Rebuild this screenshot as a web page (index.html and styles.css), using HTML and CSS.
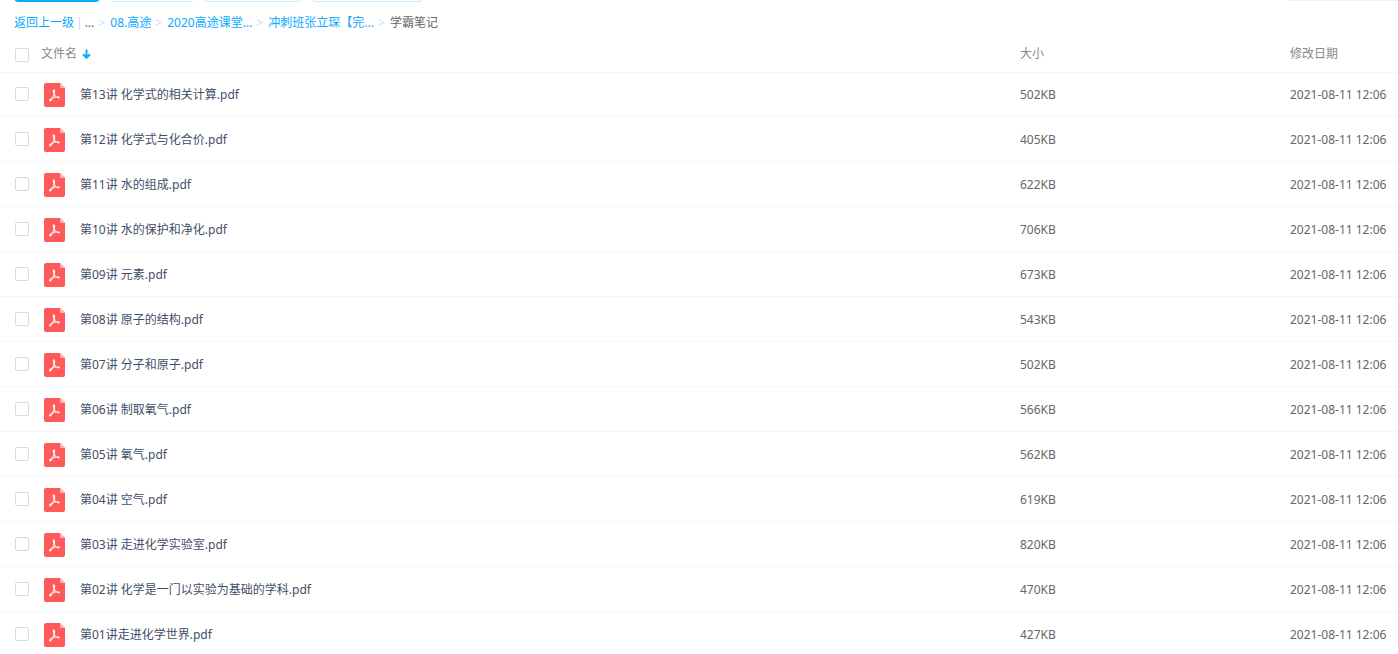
FILE: index.html
```html
<!DOCTYPE html>
<html lang="zh-CN">
<head>
<meta charset="utf-8">
<title>学霸笔记</title>
<link rel="stylesheet" href="styles.css">
</head>
<body>
<svg class="defs" aria-hidden="true">
  <symbol id="pdf" viewBox="0 0 21 24">
    <path fill="#ff5a5a" d="M2 0h14l5 5v17a2 2 0 0 1-2 2H2a2 2 0 0 1-2-2V2a2 2 0 0 1 2-2z"/>
    <path fill="#ffb3b3" d="M16 0l5 5h-4a1 1 0 0 1-1-1z"/>
    <path fill="none" stroke="#ffecec" stroke-width="1.2" stroke-linecap="round" stroke-linejoin="round" d="M9.800 6.800c.9.400.9 2.500.4 4.300-.7 2.300-2 4.900-3.400 6.400-.7.700-1.500.2-1.100-.6.900-1.500 4-2.500 6.300-2.900 2.600-.4 3.700.1 3.300.6-.5.500-3-.2-4.100-1.600C10 11.500 9.200 9.400 9.300 7.500c0-.3.2-.7.5-.7z"/>
  </symbol>
</svg>
<div class="toolbar">
  <button class="btn btn-primary" type="button"></button>
  <button class="btn btn-new" type="button"></button>
  <button class="btn btn-offline" type="button"></button>
  <button class="btn btn-devices" type="button"></button>
  <input class="search" type="search">
</div>
<nav class="crumbs">
  <a href="#">返回上一级</a><span class="bar">|</span><span class="dots">...</span><span class="sep">&gt;</span><a href="#">08.高途</a><span class="sep">&gt;</span><a href="#">2020高途课堂...</a><span class="sep">&gt;</span><a href="#">冲刺班张立琛【完...</a><span class="sep">&gt;</span><span class="current">学霸笔记</span>
</nav>
<table class="files">
  <thead>
    <tr>
      <th class="name"><div class="cell"><input type="checkbox" id="all"><label class="title" for="all">文件名</label><svg class="arrow" viewBox="0 0 9 10" aria-hidden="true"><path d="M4.500 0.500v8M1 5.200l3.500 3.500L8 5.200" fill="none" stroke="#09aaff" stroke-width="2"/></svg></div></th>
      <th class="size">大小</th>
      <th class="date">修改日期</th>
    </tr>
  </thead>
  <tbody>
    <tr><td><div class="cell"><input type="checkbox" id="f13"><svg class="icon"><use href="#pdf"/></svg><label for="f13">第13讲 化学式的相关计算.pdf</label></div></td><td>502KB</td><td>2021-08-11 12:06</td></tr>
    <tr><td><div class="cell"><input type="checkbox" id="f12"><svg class="icon"><use href="#pdf"/></svg><label for="f12">第12讲 化学式与化合价.pdf</label></div></td><td>405KB</td><td>2021-08-11 12:06</td></tr>
    <tr><td><div class="cell"><input type="checkbox" id="f11"><svg class="icon"><use href="#pdf"/></svg><label for="f11">第11讲 水的组成.pdf</label></div></td><td>622KB</td><td>2021-08-11 12:06</td></tr>
    <tr><td><div class="cell"><input type="checkbox" id="f10"><svg class="icon"><use href="#pdf"/></svg><label for="f10">第10讲 水的保护和净化.pdf</label></div></td><td>706KB</td><td>2021-08-11 12:06</td></tr>
    <tr><td><div class="cell"><input type="checkbox" id="f09"><svg class="icon"><use href="#pdf"/></svg><label for="f09">第09讲 元素.pdf</label></div></td><td>673KB</td><td>2021-08-11 12:06</td></tr>
    <tr><td><div class="cell"><input type="checkbox" id="f08"><svg class="icon"><use href="#pdf"/></svg><label for="f08">第08讲 原子的结构.pdf</label></div></td><td>543KB</td><td>2021-08-11 12:06</td></tr>
    <tr><td><div class="cell"><input type="checkbox" id="f07"><svg class="icon"><use href="#pdf"/></svg><label for="f07">第07讲 分子和原子.pdf</label></div></td><td>502KB</td><td>2021-08-11 12:06</td></tr>
    <tr><td><div class="cell"><input type="checkbox" id="f06"><svg class="icon"><use href="#pdf"/></svg><label for="f06">第06讲 制取氧气.pdf</label></div></td><td>566KB</td><td>2021-08-11 12:06</td></tr>
    <tr><td><div class="cell"><input type="checkbox" id="f05"><svg class="icon"><use href="#pdf"/></svg><label for="f05">第05讲 氧气.pdf</label></div></td><td>562KB</td><td>2021-08-11 12:06</td></tr>
    <tr><td><div class="cell"><input type="checkbox" id="f04"><svg class="icon"><use href="#pdf"/></svg><label for="f04">第04讲 空气.pdf</label></div></td><td>619KB</td><td>2021-08-11 12:06</td></tr>
    <tr><td><div class="cell"><input type="checkbox" id="f03"><svg class="icon"><use href="#pdf"/></svg><label for="f03">第03讲 走进化学实验室.pdf</label></div></td><td>820KB</td><td>2021-08-11 12:06</td></tr>
    <tr><td><div class="cell"><input type="checkbox" id="f02"><svg class="icon"><use href="#pdf"/></svg><label for="f02">第02讲 化学是一门以实验为基础的学科.pdf</label></div></td><td>470KB</td><td>2021-08-11 12:06</td></tr>
    <tr><td><div class="cell"><input type="checkbox" id="f01"><svg class="icon"><use href="#pdf"/></svg><label for="f01">第01讲走进化学世界.pdf</label></div></td><td>427KB</td><td>2021-08-11 12:06</td></tr>
  </tbody>
</table>
</body>
</html>
```
FILE: styles.css
```css
* { box-sizing: border-box; }

html { overflow: hidden; }

body {
  margin: 0;
  background: #fff;
  color: #666;
  font: 12px/18px "Noto Sans", "Noto Sans CJK SC", sans-serif;
}

.defs {
  position: absolute;
  width: 0;
  height: 0;
}

.toolbar {
  display: flex;
  align-items: flex-end;
  gap: 10px;
  height: 2px;
  padding-left: 14px;
  overflow: hidden;
}

.btn {
  flex: none;
  height: 32px;
  padding: 0;
  border: 1px solid #c3eaff;
  border-radius: 4px;
  background: #fff;
}

.btn-primary {
  width: 86px;
  border-color: #09aaff;
  background: #09aaff;
}

.btn-new { width: 84px; }
.btn-offline { width: 98px; }
.btn-devices { width: 111px; }

.search {
  width: 110px;
  height: 32px;
  margin: 0 0 1px auto;
  border: 0;
  border-radius: 4px 0 0 4px;
  background: #f0f0f0;
  appearance: none;
}

.crumbs {
  display: flex;
  align-items: center;
  height: 34px;
  padding: 8px 14px 0;
  white-space: nowrap;
}

.crumbs a {
  color: #09aaff;
  text-decoration: none;
}

.bar {
  margin: 0 2px;
  color: #c4dbfe;
}

.sep {
  width: 7px;
  margin: 0 5px 0 4px;
  color: #c4dbfe;
}

.files {
  width: 100%;
  border-collapse: separate;
  border-spacing: 0;
  table-layout: fixed;
}

.files th,
.files td {
  height: 45px;
  padding: 2px 0 0;
  border-bottom: 1px solid #f2f6fd;
  text-align: left;
  font-weight: normal;
  white-space: nowrap;
}

.files th {
  height: 37px;
  padding: 0;
  color: #888;
}

.files tbody tr:first-child td {
  height: 44px;
  padding: 0;
}

.size { width: 270px; }
.date { width: 108px; }

.cell {
  display: flex;
  align-items: center;
  padding-left: 15px;
}

.cell label { color: #424e67; }

.cell .title {
  margin-left: 12px;
  color: #888;
}

.cell input {
  flex: none;
  width: 14px;
  height: 14px;
  margin: 0 0 2px;
  border: 1px solid #d5dbe6;
  border-radius: 2px;
  background: #fff;
  appearance: none;
}

th .cell input { margin: 2px 0 0; }

.cell input:checked { background: #09aaff; }

.icon {
  flex: none;
  width: 21px;
  height: 24px;
  margin: 0 15px;
}

.arrow {
  width: 9px;
  height: 10px;
  margin-left: 5px;
}
```
